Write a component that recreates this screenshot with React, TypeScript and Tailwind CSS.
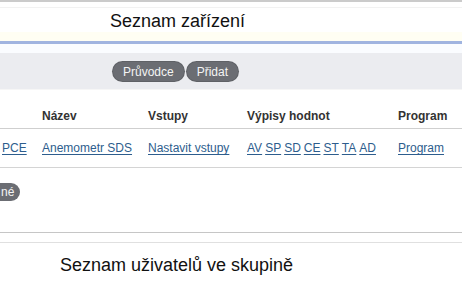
const links = ["AV", "SP", "SD", "CE", "ST", "TA", "AD"];

const Pill = ({ children }: { children: React.ReactNode }) => (
  <span className="inline-flex h-[19px] items-center rounded-full bg-[#6b6d73] px-[10px] text-[12px] text-[#f4f4f4] shadow-[0_0_0_1px_#5f6166]">
    {children}
  </span>
);

const A = ({ children }: { children: React.ReactNode }) => (
  <a href="#" className="text-[#2d5d8d] underline decoration-[#2d5d8d] underline-offset-2">
    {children}
  </a>
);

export default function App() {
  return (
    <div className="h-[284px] w-[462px] overflow-hidden bg-white font-['Liberation_Sans',Arial,sans-serif] text-[#222]">
      <div className="h-[2px] bg-[#cbcbcb]" />
      <div className="h-[5px]" />
      <div className="h-px bg-[#f2f2f2]" />
      <div className="h-[24px] pl-[110px] pt-[3px] text-[18px] leading-[21px] text-[#111]">
        Seznam zařízení
      </div>
      <div className="h-[9px] bg-[#fffef3]" />
      <div className="h-[3px] bg-[#a0b4e0]" />
      <div className="h-[9px] bg-[#fafcff]" />
      <div className="flex h-[36px] items-center gap-[3px] bg-[#ebecf0] pl-[113px] pt-[1px]">
        <Pill>Průvodce</Pill>
        <Pill>Přidat</Pill>
      </div>
      <div className="h-px bg-[#f6f6f6]" />

      <div className="mt-[13px] grid h-[26px] grid-cols-[42px_106px_99px_151px_1fr] items-center border-b border-[#cfcfcf] text-[12px] font-bold text-[#333]">
        <span />
        <span>Název</span>
        <span>Vstupy</span>
        <span>Výpisy hodnot</span>
        <span>Program</span>
      </div>
      <div className="grid h-[39px] grid-cols-[42px_106px_99px_151px_1fr] items-center border-b border-[#d4d4d4] text-[12px]">
        <span className="pl-[2px]">
          <A>PCE</A>
        </span>
        <span>
          <A>Anemometr SDS</A>
        </span>
        <span>
          <A>Nastavit vstupy</A>
        </span>
        <span className="flex gap-[3px]">
          {links.map((l) => (
            <A key={l}>{l}</A>
          ))}
        </span>
        <span>
          <A>Program</A>
        </span>
      </div>

      <div className="mt-[15px] flex">
        <span className="inline-flex h-[18px] items-center rounded-r-full bg-[#6b6d73] pl-[1px] pr-[6px] text-[12px] text-[#f4f4f4]">
          né
        </span>
      </div>

      <div className="mt-[31px] h-px bg-[#c6c6c6]" />
      <div className="h-[9px]" />
      <div className="h-px bg-[#e0e0e0]" />
      <div className="mt-[12px] pl-[60px] text-[18px] leading-[21px] text-[#111]">
        Seznam uživatelů ve skupině
      </div>
    </div>
  );
}
